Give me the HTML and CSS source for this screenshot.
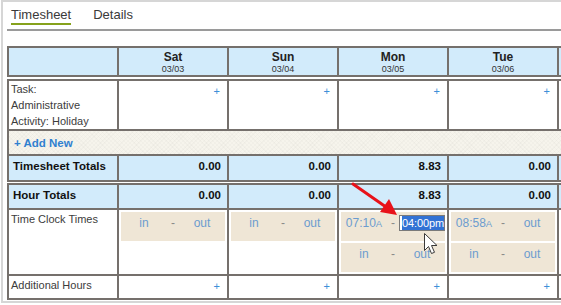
FILE: index.html
```html
<!DOCTYPE html>
<html>
<head>
<meta charset="utf-8">
<link rel="stylesheet" href="styles.css">
</head>
<body>
<div class="frame">
  <nav class="tabs">
    <span class="tab active">Timesheet</span>
    <span class="tab">Details</span>
  </nav>
  <div class="sheet">
    <table class="grid">
      <colgroup><col><col><col><col><col><col></colgroup>
      <tr class="head-row">
        <th></th>
        <th><div class="day">Sat</div><div class="date">03/03</div></th>
        <th><div class="day">Sun</div><div class="date">03/04</div></th>
        <th><div class="day">Mon</div><div class="date">03/05</div></th>
        <th><div class="day">Tue</div><div class="date">03/06</div></th>
        <th></th>
      </tr>
    </table>
    <table class="grid gap-lg">
      <colgroup><col><col><col><col><col><col></colgroup>
      <tr class="task-row">
        <td class="label">Task:<br>Administrative<br>Activity: Holiday</td>
        <td class="add"><span class="plus">+</span></td>
        <td class="add"><span class="plus">+</span></td>
        <td class="add"><span class="plus">+</span></td>
        <td class="add"><span class="plus">+</span></td>
        <td></td>
      </tr>
      <tr class="addnew-row">
        <td colspan="6"><span class="addnew">+ Add New</span></td>
      </tr>
      <tr class="totals-row">
        <td class="total-label">Timesheet Totals</td>
        <td class="num">0.00</td>
        <td class="num">0.00</td>
        <td class="num">8.83</td>
        <td class="num">0.00</td>
        <td></td>
      </tr>
    </table>
    <table class="grid gap-sm">
      <colgroup><col><col><col><col><col><col></colgroup>
      <tr class="totals-row hour-row">
        <td class="total-label">Hour Totals</td>
        <td class="num">0.00</td>
        <td class="num">0.00</td>
        <td class="num">8.83</td>
        <td class="num">0.00</td>
        <td></td>
      </tr>
      <tr class="clock-row">
        <td class="label">Time Clock Times</td>
        <td class="clock">
          <div class="punch"><span>in</span><span class="dash">-</span><span>out</span></div>
        </td>
        <td class="clock">
          <div class="punch"><span>in</span><span class="dash">-</span><span>out</span></div>
        </td>
        <td class="clock">
          <div class="punch"><span>07:10<small>A</small></span><span class="dash">-</span><span class="edit"><span class="sel">04:00pm</span></span></div>
          <div class="punch"><span>in</span><span class="dash">-</span><span>out</span></div>
        </td>
        <td class="clock">
          <div class="punch"><span>08:58<small>A</small></span><span class="dash">-</span><span>out</span></div>
          <div class="punch"><span>in</span><span class="dash">-</span><span>out</span></div>
        </td>
        <td class="clock"></td>
      </tr>
      <tr class="extra-row">
        <td class="label">Additional Hours</td>
        <td class="add"><span class="plus">+</span></td>
        <td class="add"><span class="plus">+</span></td>
        <td class="add"><span class="plus">+</span></td>
        <td class="add"><span class="plus">+</span></td>
        <td></td>
      </tr>
    </table>
  </div>
  <svg class="overlay" width="561" height="305" viewBox="0 0 561 305">
    <line x1="353" y1="184" x2="386" y2="207" stroke="#e8121a" stroke-width="3" stroke-linecap="round"/>
    <polygon points="397,215 380,212 389,199" fill="#e8121a"/>
    <path d="M424.5 233.5 L424.5 250.5 L428.5 246.5 L431.5 253.5 L434.5 252.3 L431.5 245.5 L437 245.5 Z" fill="#ffffff" stroke="#3a3a3a" stroke-width="1" stroke-linejoin="round"/>
  </svg>
</div>
</body>
</html>
```
FILE: styles.css
```css
html, body {
  margin: 0;
  padding: 0;
  overflow: hidden;
  background: #ffffff;
}

.frame {
  position: relative;
  margin-left: 1px;
  width: 556px;
  height: 299px;
  padding-left: 4px;
  border: 2px solid #d6d6d6;
  border-right: none;
  overflow: hidden;
  font-family: "Liberation Sans", Arial, sans-serif;
  color: #333333;
}

.tabs {
  display: flex;
  height: 27px;
  border-bottom: 2px solid #9a9a9a;
}

.tab {
  margin-left: 4px;
  margin-right: 18px;
  padding-top: 5px;
  height: 16px;
  line-height: 16px;
  font-size: 13px;
  color: #3a3a3a;
}

.tab.active {
  border-bottom: 2px solid #86a21c;
}

.sheet {
  margin-top: 15px;
}

.grid {
  width: 662px;
  table-layout: fixed;
  border-collapse: separate;
  border-spacing: 0;
  border-top: 2px solid #75706c;
  border-left: 2px solid #75706c;
}

.grid col {
  width: 110px;
}

.grid th,
.grid td {
  padding: 0;
  border-right: 2px solid #75706c;
  border-bottom: 2px solid #75706c;
  vertical-align: top;
  box-sizing: border-box;
}

.gap-lg { margin-top: 2px; }
.gap-sm { margin-top: 1px; }

.head-row th {
  height: 29px;
  padding-top: 2px;
  background: #d2ebfb;
  text-align: center;
  color: #222222;
}

.day {
  font-size: 12px;
  line-height: 14px;
  font-weight: bold;
}

.date {
  font-size: 9px;
  line-height: 11px;
  font-weight: normal;
  color: #333333;
}

.label {
  padding-left: 2px !important;
  font-size: 11px;
  line-height: 16px;
  color: #3c3c3c;
}

.task-row td {
  height: 50px;
  background: #ffffff;
}

.add {
  text-align: right;
  padding-right: 7px !important;
}

.plus {
  display: inline-block;
  padding-top: 3px;
  font-size: 11px;
  line-height: 14px;
  color: #3d8fd8;
}

.addnew-row td {
  height: 25px;
  padding-left: 5px;
  background-color: #f6f4ec;
  background-image: repeating-linear-gradient(45deg, rgba(0,0,0,0.018) 0 1px, transparent 1px 3px),
                    repeating-linear-gradient(-45deg, rgba(0,0,0,0.018) 0 1px, transparent 1px 3px);
}

.addnew {
  display: inline-block;
  padding-top: 5px;
  font-size: 11.5px;
  line-height: 14px;
  font-weight: bold;
  color: #2f80d0;
}

.totals-row td {
  height: 26px;
  background: #d2ebfb;
  font-size: 11.5px;
  line-height: 14px;
  font-weight: bold;
  color: #111111;
  padding-top: 3px;
}

.hour-row td {
  height: 25px;
}

.total-label {
  padding-left: 4px !important;
}

.num {
  text-align: right;
  padding-right: 6px !important;
}

.clock-row td {
  height: 64px;
}

.clock-row .label {
  padding-top: 1px;
}

.clock {
  padding: 2px 2px 0 2px !important;
}

.punch {
  display: grid;
  grid-template-columns: 1fr 12px 1fr;
  height: 29px;
  margin-bottom: 2px;
  background: #efe6d6;
  font-size: 12px;
  line-height: 23px;
  color: #6c9ccf;
  text-align: center;
}

.punch small {
  font-size: 9.5px;
}

.dash {
  color: #8a8a8a;
}

.edit {
  position: relative;
  justify-self: end;
  margin-top: 3px;
  height: 16px;
  width: 46px;
  border: 1px solid #7a7a7a;
  background: #ffffff;
  line-height: 14px;
  text-align: left;
  box-sizing: border-box;
  padding: 0 1px 0 2px;
}

.sel {
  display: inline-block;
  height: 14px;
  background: #3272d4;
  color: #ffffff;
  font-size: 11px;
  letter-spacing: -0.1px;
}

.extra-row td {
  height: 24px;
}

.extra-row .label {
  padding-top: 1px;
}

.overlay {
  position: absolute;
  left: -3px;
  top: -2px;
  pointer-events: none;
}
```
